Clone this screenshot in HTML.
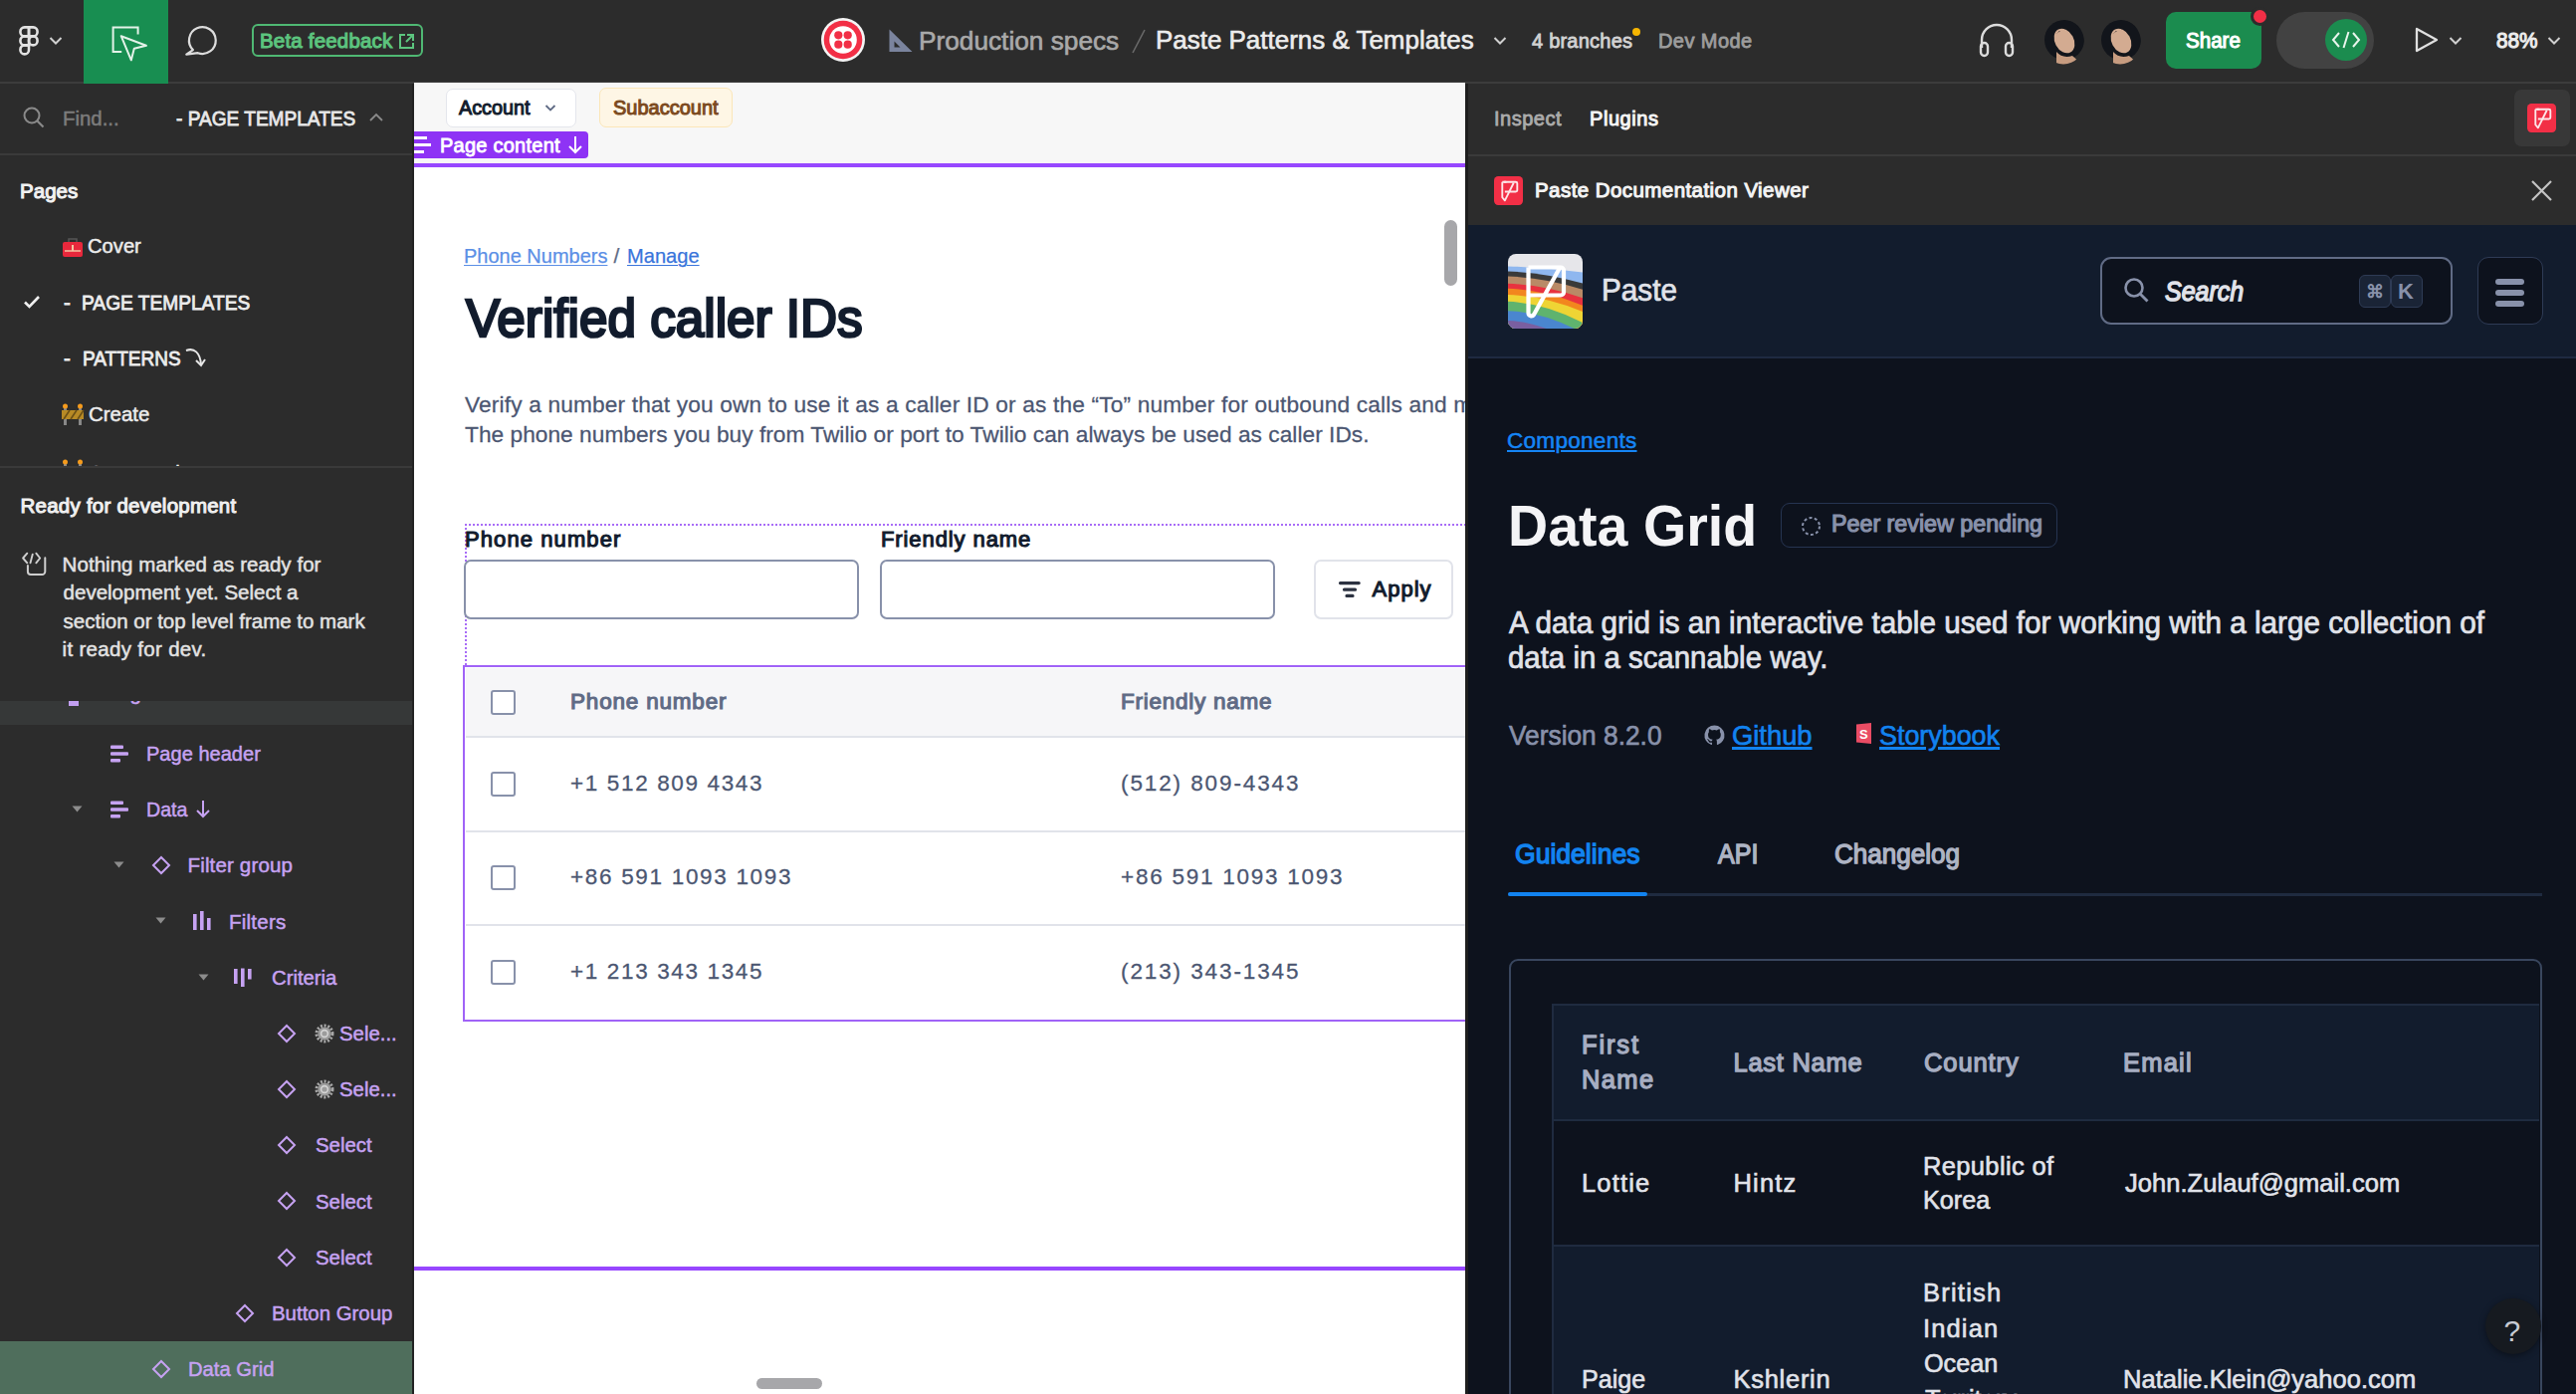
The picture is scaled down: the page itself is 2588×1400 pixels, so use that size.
<!DOCTYPE html><html><head><meta charset="utf-8"><title>Figma Dev Mode</title><style>
*{margin:0;padding:0;box-sizing:border-box}
html,body{width:2588px;height:1400px;overflow:hidden;background:#2c2c2c;font-family:"Liberation Sans",sans-serif}
.t{position:absolute;white-space:nowrap}
svg{overflow:visible}
</style></head><body><div style="position:absolute;left:0px;top:0px;width:2588px;height:83px;background:#2c2c2c"></div>
<div style="position:absolute;left:0px;top:82px;width:2588px;height:2px;background:#3c3c3c"></div>
<div style="position:absolute;left:84px;top:0px;width:85px;height:84px;background:#188e51"></div>
<svg style="position:absolute;left:18.5px;top:25.7px;" width="20" height="30" viewBox="0 0 20 30"><g fill="none" stroke="#e2e2e2" stroke-width="2.6">
<path d="M10 1.4H5.7a4.3 4.5 0 0 0 0 9H10z"/><path d="M10 1.4h4.3a4.3 4.5 0 0 1 0 9H10z"/>
<path d="M10 10.4H5.7a4.3 4.5 0 0 0 0 9H10z"/><ellipse cx="14.3" cy="14.9" rx="4.3" ry="4.5"/>
<path d="M10 19.4H5.7a4.3 4.5 0 1 0 4.3 4.5z"/></g></svg>
<svg style="position:absolute;left:49px;top:36px;" width="14" height="10" viewBox="0 0 14 10"><path d="M1.5 2l5.5 5.5L12.5 2" fill="none" stroke="#d0d0d0" stroke-width="2"/></svg>
<svg style="position:absolute;left:110px;top:24px;" width="40" height="40" viewBox="0 0 40 40"><path d="M12.2 28.1H3.6V3.6H28.6V10.6" fill="none" stroke="#e3f2e8" stroke-width="2"/>
<path d="M11.7 12.2L36.9 21.8L24.8 24.8L21.8 36.4z" fill="none" stroke="#e3f2e8" stroke-width="2" stroke-linejoin="round"/></svg>
<svg style="position:absolute;left:184px;top:22px;" width="38" height="38" viewBox="0 0 38 38"><path d="M9.9 28.1A13.4 13.4 0 1 1 14.8 31.2L3.3 32.6z" fill="none" stroke="#dcdcdc" stroke-width="2.2" stroke-linejoin="round"/></svg>
<div style="position:absolute;left:253px;top:24px;width:172px;height:33px;border:2px solid #4fb873;border-radius:6px"></div>
<div class="t" style="left:261.00px;top:30.65px;font-size:20.5px;line-height:20.5px;color:#5cc47e;font-weight:400;-webkit-text-stroke:1.03px #5cc47e;letter-spacing:0.182px;">Beta feedback</div>
<svg style="position:absolute;left:400px;top:33px;" width="17" height="17" viewBox="0 0 17 17"><path d="M7 2H2v13h13v-5" fill="none" stroke="#5cc47e" stroke-width="2"/><path d="M9 2h6v6M15 2L8 9" fill="none" stroke="#5cc47e" stroke-width="2"/></svg>
<svg style="position:absolute;left:825px;top:18px;" width="44" height="44" viewBox="0 0 44 44"><circle cx="22" cy="22" r="22" fill="#f4f4f4"/><circle cx="22" cy="22" r="19.3" fill="#f22f46"/>
<circle cx="22" cy="22" r="13.8" fill="#fff"/><circle cx="17.3" cy="17.3" r="4.1" fill="#f22f46"/><circle cx="26.7" cy="17.3" r="4.1" fill="#f22f46"/>
<circle cx="17.3" cy="26.7" r="4.1" fill="#f22f46"/><circle cx="26.7" cy="26.7" r="4.1" fill="#f22f46"/></svg>
<svg style="position:absolute;left:892px;top:28px;" width="26" height="25" viewBox="0 0 26 25"><path d="M1.5 1.5v22.5h23z M6.5 13.5v6h6z" fill="#7b849e" fill-rule="evenodd"/></svg>
<div class="t" style="left:923.02px;top:27.57px;font-size:26.5px;line-height:26.5px;color:#a9a9a9;font-weight:400;-webkit-text-stroke:0.64px #a9a9a9;transform:scaleX(0.9899);transform-origin:0 0;">Production specs</div>
<svg style="position:absolute;left:1136px;top:29px;" width="16" height="25" viewBox="0 0 16 25"><path d="M14 1L2 24" stroke="#6a6a6a" stroke-width="1.6"/></svg>
<div class="t" style="left:1161.04px;top:26.57px;font-size:26.5px;line-height:26.5px;color:#ececec;font-weight:400;-webkit-text-stroke:0.64px #ececec;transform:scaleX(0.9792);transform-origin:0 0;">Paste Patterns &amp; Templates</div>
<svg style="position:absolute;left:1500px;top:36px;" width="14" height="10" viewBox="0 0 14 10"><path d="M1.5 2l5.5 5.5L12.5 2" fill="none" stroke="#cfcfcf" stroke-width="2"/></svg>
<div class="t" style="left:1539.00px;top:31.07px;font-size:20px;line-height:20px;color:#d2d2d2;font-weight:400;-webkit-text-stroke:0.80px #d2d2d2;letter-spacing:0.227px;">4 branches</div>
<div style="position:absolute;left:1640px;top:28px;width:8px;height:8px;background:#f7b500;border-radius:50%"></div>
<div class="t" style="left:1666.00px;top:31.07px;font-size:20px;line-height:20px;color:#9d9d9d;font-weight:400;-webkit-text-stroke:0.80px #9d9d9d;letter-spacing:0.424px;">Dev Mode</div>
<svg style="position:absolute;left:1987px;top:22px;" width="38" height="36" viewBox="0 0 38 36"><path d="M4 26V18a15 15 0 0 1 30 0v8" fill="none" stroke="#dcdcdc" stroke-width="2.4"/>
<rect x="3" y="21" width="7" height="13" rx="3.5" fill="none" stroke="#dcdcdc" stroke-width="2.4"/><rect x="28" y="21" width="7" height="13" rx="3.5" fill="none" stroke="#dcdcdc" stroke-width="2.4"/></svg>
<svg style="position:absolute;left:2052px;top:19px;" width="42" height="46" viewBox="0 0 42 46"><defs><clipPath id="ac2073"><ellipse cx="21" cy="23" rx="21" ry="22.5"/></clipPath></defs><g clip-path="url(#ac2073)">
<ellipse cx="22" cy="21" rx="20" ry="20" fill="#12151b"/>
<path d="M14 33 Q20 40 30 37 L38 44 Q30 48 14 47z" fill="#c79c80"/>
<ellipse cx="22" cy="22" rx="9.5" ry="13" transform="rotate(-28 22 22)" fill="#d3ab91"/>
<path d="M13 16 Q20 8 30 12 Q25 9 17 12z" fill="#12151b"/></g></svg>
<svg style="position:absolute;left:2109px;top:19px;" width="42" height="46" viewBox="0 0 42 46"><defs><clipPath id="ac2130"><ellipse cx="21" cy="23" rx="21" ry="22.5"/></clipPath></defs><g clip-path="url(#ac2130)">
<ellipse cx="22" cy="21" rx="20" ry="20" fill="#12151b"/>
<path d="M14 33 Q20 40 30 37 L38 44 Q30 48 14 47z" fill="#c79c80"/>
<ellipse cx="22" cy="22" rx="9.5" ry="13" transform="rotate(-28 22 22)" fill="#d3ab91"/>
<path d="M13 16 Q20 8 30 12 Q25 9 17 12z" fill="#12151b"/></g></svg>
<div style="position:absolute;left:2176px;top:12px;width:96px;height:57px;background:#1b8c4f;border-radius:10px"></div>
<div class="t" style="left:2196.00px;top:30.80px;font-size:21.5px;line-height:21.5px;color:#ffffff;font-weight:400;-webkit-text-stroke:1.07px #ffffff;transform:scaleX(0.9572);transform-origin:0 0;">Share</div>
<div style="position:absolute;left:2261px;top:7px;width:19px;height:19px;background:#f22f46;border-radius:50%;border:3px solid #2c2c2c"></div>
<div style="position:absolute;left:2287px;top:12px;width:98px;height:57px;background:#424242;border-radius:29px"></div>
<div style="position:absolute;left:2336px;top:19px;width:42px;height:42px;background:#1b8c4f;border-radius:50%"></div>
<svg style="position:absolute;left:2342px;top:30px;" width="30" height="20" viewBox="0 0 30 20"><path d="M8 3L2 10l6 7M22 3l6 7-6 7M17.5 2l-5 16" fill="none" stroke="#e8f5ec" stroke-width="2"/></svg>
<svg style="position:absolute;left:2425px;top:26px;" width="26" height="28" viewBox="0 0 26 28"><path d="M3 3l20 11L3 25z" fill="none" stroke="#e0e0e0" stroke-width="2.3" stroke-linejoin="round"/></svg>
<svg style="position:absolute;left:2460px;top:36px;" width="14" height="10" viewBox="0 0 14 10"><path d="M1.5 2l5.5 5.5L12.5 2" fill="none" stroke="#cfcfcf" stroke-width="2"/></svg>
<div class="t" style="left:2508.00px;top:30.38px;font-size:22px;line-height:22px;color:#ececec;font-weight:400;-webkit-text-stroke:1.10px #ececec;transform:scaleX(0.9432);transform-origin:0 0;">88%</div>
<svg style="position:absolute;left:2559px;top:36px;" width="14" height="10" viewBox="0 0 14 10"><path d="M1.5 2l5.5 5.5L12.5 2" fill="none" stroke="#cfcfcf" stroke-width="2"/></svg>
<div style="position:absolute;left:0px;top:84px;width:415px;height:1316px;background:#2c2c2c"></div>
<div style="position:absolute;left:414px;top:84px;width:2px;height:1316px;background:#232323"></div>
<svg style="position:absolute;left:22px;top:106px;" width="26" height="26" viewBox="0 0 26 26"><circle cx="10" cy="10" r="7.5" fill="none" stroke="#8a8a8a" stroke-width="2"/><path d="M15.5 15.5l6 6" stroke="#8a8a8a" stroke-width="2.2"/></svg>
<div class="t" style="left:63.00px;top:108.65px;font-size:20.5px;line-height:20.5px;color:#7c7c7c;font-weight:400;-webkit-text-stroke:0.49px #7c7c7c;transform:scaleX(0.9950);transform-origin:0 0;">Find...</div>
<div class="t" style="left:177.00px;top:108.65px;font-size:20.5px;line-height:20.5px;color:#e8e8e8;font-weight:400;-webkit-text-stroke:0.82px #e8e8e8;transform:scaleX(0.9309);transform-origin:0 0;">- PAGE TEMPLATES</div>
<svg style="position:absolute;left:370px;top:112px;" width="16" height="12" viewBox="0 0 16 12"><path d="M2 9l6-6 6 6" fill="none" stroke="#8a8a8a" stroke-width="1.8"/></svg>
<div style="position:absolute;left:0px;top:154px;width:414px;height:2px;background:#3a3a3a"></div>
<div class="t" style="left:20.00px;top:181.65px;font-size:20.5px;line-height:20.5px;color:#f2f2f2;font-weight:400;-webkit-text-stroke:1.03px #f2f2f2;letter-spacing:0.031px;">Pages</div>
<svg style="position:absolute;left:62px;top:237px;" width="22" height="22" viewBox="0 0 22 22"><rect x="1" y="6" width="20" height="15" rx="2" fill="#e8283c"/><path d="M7 6V3h8v3" fill="none" stroke="#555" stroke-width="1.5"/><path d="M3 15h16" stroke="#f5c4a0" stroke-width="1.5"/><rect x="10" y="9" width="2" height="6" fill="#f5c4a0"/></svg>
<div class="t" style="left:88.02px;top:236.65px;font-size:20.5px;line-height:20.5px;color:#ececec;font-weight:400;-webkit-text-stroke:0.49px #ececec;transform:scaleX(0.9841);transform-origin:0 0;">Cover</div>
<svg style="position:absolute;left:22px;top:295px;" width="20" height="16" viewBox="0 0 20 16"><path d="M3 8.5l4.5 4.5L17 3" fill="none" stroke="#f0f0f0" stroke-width="2.6"/></svg>
<div class="t" style="left:64.00px;top:293.65px;font-size:20.5px;line-height:20.5px;color:#ececec;font-weight:400;-webkit-text-stroke:0.82px #ececec;">-</div>
<div class="t" style="left:81.67px;top:293.65px;font-size:20.5px;line-height:20.5px;color:#ececec;font-weight:400;-webkit-text-stroke:0.82px #ececec;transform:scaleX(0.9342);transform-origin:0 0;">PAGE TEMPLATES</div>
<div class="t" style="left:64.00px;top:349.65px;font-size:20.5px;line-height:20.5px;color:#ececec;font-weight:400;-webkit-text-stroke:0.82px #ececec;">-</div>
<div class="t" style="left:82.57px;top:349.65px;font-size:20.5px;line-height:20.5px;color:#ececec;font-weight:400;-webkit-text-stroke:0.82px #ececec;transform:scaleX(0.9271);transform-origin:0 0;">PATTERNS</div>
<svg style="position:absolute;left:185px;top:348px;" width="24" height="24" viewBox="0 0 24 24"><path d="M2 4c8-3 14 2 15 14" fill="none" stroke="#e6e6e6" stroke-width="2"/><path d="M12 14l5 5 4-6" fill="none" stroke="#e6e6e6" stroke-width="2"/></svg>
<svg style="position:absolute;left:62px;top:405px;" width="22" height="22" viewBox="0 0 22 22"><rect x="2" y="1" width="3" height="21" fill="#888"/><rect x="17" y="1" width="3" height="21" fill="#888"/><circle cx="3.5" cy="3" r="2.5" fill="#f59b1c"/><circle cx="18.5" cy="3" r="2.5" fill="#f59b1c"/><rect x="0" y="7" width="22" height="9" fill="#b78a25"/><path d="M2 16l6-9M9 16l6-9M16 16l6-9" stroke="#6b5016" stroke-width="1.6"/></svg>
<div class="t" style="left:88.50px;top:405.65px;font-size:20.5px;line-height:20.5px;color:#ececec;font-weight:400;-webkit-text-stroke:0.49px #ececec;transform:scaleX(0.9979);transform-origin:0 0;">Create</div>
<div style="position:absolute;left:0;top:440px;width:414px;height:28px;overflow:hidden">
<svg style="position:absolute;left:62px;top:21px;" width="22" height="22" viewBox="0 0 22 22"><rect x="2" y="1" width="3" height="21" fill="#888"/><rect x="17" y="1" width="3" height="21" fill="#888"/><circle cx="3.5" cy="3" r="2.5" fill="#f59b1c"/><circle cx="18.5" cy="3" r="2.5" fill="#f59b1c"/></svg>
<div class="t" style="left:88.50px;top:24.85px;font-size:20.5px;line-height:20.5px;color:#ececec;font-weight:400;-webkit-text-stroke:0.49px #ececec;">Construction</div>
</div>
<div style="position:absolute;left:0px;top:468px;width:414px;height:2px;background:#3a3a3a"></div>
<div class="t" style="left:20.50px;top:498.05px;font-size:20.5px;line-height:20.5px;color:#f0f0f0;font-weight:400;-webkit-text-stroke:1.03px #f0f0f0;letter-spacing:0.237px;">Ready for development</div>
<svg style="position:absolute;left:21px;top:553px;" width="28" height="27" viewBox="0 0 28 27"><path d="M6.3 2.7L2.1 7.5L6.3 12.3M11.8 3.6L9.5 12.3M15.3 2.7L19.2 7.5L15.3 12.3" fill="none" stroke="#cfcfcf" stroke-width="1.9" stroke-linecap="round" stroke-linejoin="round"/><path d="M6.9 14.9V21a3 3 0 0 0 3 3H21.3a3 3 0 0 0 3-3V7.2" fill="none" stroke="#cfcfcf" stroke-width="2" stroke-linecap="round"/></svg>
<div class="t" style="left:62.60px;top:557.15px;font-size:20.5px;line-height:20.5px;color:#e3e3e3;font-weight:400;-webkit-text-stroke:0.49px #e3e3e3;letter-spacing:0.045px;">Nothing marked as ready for</div>
<div class="t" style="left:63.60px;top:585.45px;font-size:20.5px;line-height:20.5px;color:#e3e3e3;font-weight:400;-webkit-text-stroke:0.49px #e3e3e3;">development yet. Select a</div>
<div class="t" style="left:63.60px;top:613.75px;font-size:20.5px;line-height:20.5px;color:#e3e3e3;font-weight:400;-webkit-text-stroke:0.49px #e3e3e3;">section or top level frame to mark</div>
<div class="t" style="left:62.60px;top:642.05px;font-size:20.5px;line-height:20.5px;color:#e3e3e3;font-weight:400;-webkit-text-stroke:0.49px #e3e3e3;letter-spacing:0.308px;">it ready for dev.</div>
<div style="position:absolute;left:0px;top:704px;width:414px;height:24px;background:#363838"></div>
<div style="position:absolute;left:0;top:704px;width:414px;height:24px;overflow:hidden">
<div style="position:absolute;left:69px;top:0px;width:10px;height:4.5px;background:#c29ff0"></div>
<div class="t" style="left:105.40px;top:-17.55px;font-size:20.5px;line-height:20.5px;color:#c6a2f2;font-weight:400;-webkit-text-stroke:0.49px #c6a2f2;">Page content</div>
</div>
<svg style="position:absolute;left:110px;top:746.8px;" width="20" height="20" viewBox="0 0 20 20"><rect x="1" y="1.5" width="13" height="3.6" rx="1" fill="#c6a2f2"/><rect x="1" y="8.2" width="18" height="3.6" rx="1" fill="#c6a2f2"/><rect x="1" y="15" width="10" height="3.6" rx="1" fill="#c6a2f2"/></svg>
<div class="t" style="left:147.42px;top:746.95px;font-size:20.5px;line-height:20.5px;color:#c6a2f2;font-weight:400;-webkit-text-stroke:0.49px #c6a2f2;transform:scaleX(0.9779);transform-origin:0 0;">Page header</div>
<svg style="position:absolute;left:72px;top:809.0px;" width="11" height="8" viewBox="0 0 11 8"><path d="M0.5 0.5h10L5.5 6.5z" fill="#8c8c8c"/></svg>
<svg style="position:absolute;left:110px;top:803.0px;" width="20" height="20" viewBox="0 0 20 20"><rect x="1" y="1.5" width="13" height="3.6" rx="1" fill="#c6a2f2"/><rect x="1" y="8.2" width="18" height="3.6" rx="1" fill="#c6a2f2"/><rect x="1" y="15" width="10" height="3.6" rx="1" fill="#c6a2f2"/></svg>
<div class="t" style="left:147.44px;top:803.15px;font-size:20.5px;line-height:20.5px;color:#c6a2f2;font-weight:400;-webkit-text-stroke:0.49px #c6a2f2;transform:scaleX(0.9557);transform-origin:0 0;">Data</div>
<svg style="position:absolute;left:196px;top:803.0px;" width="16" height="20" viewBox="0 0 16 20"><path d="M8 1v16M2 11l6 6 6-6" fill="none" stroke="#c6a2f2" stroke-width="2"/></svg>
<svg style="position:absolute;left:114px;top:865.1999999999999px;" width="11" height="8" viewBox="0 0 11 8"><path d="M0.5 0.5h10L5.5 6.5z" fill="#8c8c8c"/></svg>
<svg style="position:absolute;left:152px;top:859.1999999999999px;" width="20" height="20" viewBox="0 0 20 20"><path d="M10 2l8 8-8 8-8-8z" fill="none" stroke="#c6a2f2" stroke-width="2"/></svg>
<div class="t" style="left:188.50px;top:859.35px;font-size:20.5px;line-height:20.5px;color:#c6a2f2;font-weight:400;-webkit-text-stroke:0.49px #c6a2f2;letter-spacing:0.156px;">Filter group</div>
<svg style="position:absolute;left:156px;top:921.4px;" width="11" height="8" viewBox="0 0 11 8"><path d="M0.5 0.5h10L5.5 6.5z" fill="#8c8c8c"/></svg>
<svg style="position:absolute;left:193px;top:915.4px;" width="22" height="20" viewBox="0 0 22 20"><rect x="1" y="3" width="3.6" height="16" fill="#c6a2f2"/><rect x="8" y="0" width="3.6" height="19" fill="#c6a2f2"/><rect x="15" y="7" width="3.6" height="12" fill="#c6a2f2"/></svg>
<div class="t" style="left:230.00px;top:915.55px;font-size:20.5px;line-height:20.5px;color:#c6a2f2;font-weight:400;-webkit-text-stroke:0.49px #c6a2f2;letter-spacing:0.241px;">Filters</div>
<svg style="position:absolute;left:199px;top:977.5999999999999px;" width="11" height="8" viewBox="0 0 11 8"><path d="M0.5 0.5h10L5.5 6.5z" fill="#8c8c8c"/></svg>
<svg style="position:absolute;left:234px;top:971.5999999999999px;" width="22" height="20" viewBox="0 0 22 20"><rect x="1" y="1" width="3.6" height="15" fill="#c6a2f2"/><rect x="8" y="0.5" width="3.6" height="18.5" fill="#c6a2f2"/><rect x="15" y="1" width="3.6" height="10.5" fill="#c6a2f2"/></svg>
<div class="t" style="left:273.01px;top:971.75px;font-size:20.5px;line-height:20.5px;color:#c6a2f2;font-weight:400;-webkit-text-stroke:0.49px #c6a2f2;transform:scaleX(0.9899);transform-origin:0 0;">Criteria</div>
<svg style="position:absolute;left:278px;top:1027.8px;" width="20" height="20" viewBox="0 0 20 20"><path d="M10 2l8 8-8 8-8-8z" fill="none" stroke="#c6a2f2" stroke-width="2"/></svg>
<svg style="position:absolute;left:316px;top:1027.8px;" width="20" height="20" viewBox="0 0 20 20"><circle cx="10" cy="10" r="8" fill="none" stroke="#a8a8a8" stroke-width="3" stroke-dasharray="2.1 1.6"/><circle cx="10" cy="10" r="6.6" fill="#9c9c9c"/><circle cx="10" cy="10" r="3.4" fill="none" stroke="#d4d4d4" stroke-width="1.6"/></svg>
<div class="t" style="left:341.00px;top:1027.95px;font-size:20.5px;line-height:20.5px;color:#c6a2f2;font-weight:400;-webkit-text-stroke:0.49px #c6a2f2;transform:scaleX(0.9925);transform-origin:0 0;">Sele...</div>
<svg style="position:absolute;left:278px;top:1084.0px;" width="20" height="20" viewBox="0 0 20 20"><path d="M10 2l8 8-8 8-8-8z" fill="none" stroke="#c6a2f2" stroke-width="2"/></svg>
<svg style="position:absolute;left:316px;top:1084.0px;" width="20" height="20" viewBox="0 0 20 20"><circle cx="10" cy="10" r="8" fill="none" stroke="#a8a8a8" stroke-width="3" stroke-dasharray="2.1 1.6"/><circle cx="10" cy="10" r="6.6" fill="#9c9c9c"/><circle cx="10" cy="10" r="3.4" fill="none" stroke="#d4d4d4" stroke-width="1.6"/></svg>
<div class="t" style="left:341.00px;top:1084.15px;font-size:20.5px;line-height:20.5px;color:#c6a2f2;font-weight:400;-webkit-text-stroke:0.49px #c6a2f2;transform:scaleX(0.9925);transform-origin:0 0;">Sele...</div>
<svg style="position:absolute;left:278px;top:1140.2px;" width="20" height="20" viewBox="0 0 20 20"><path d="M10 2l8 8-8 8-8-8z" fill="none" stroke="#c6a2f2" stroke-width="2"/></svg>
<div class="t" style="left:316.50px;top:1140.35px;font-size:20.5px;line-height:20.5px;color:#c6a2f2;font-weight:400;-webkit-text-stroke:0.49px #c6a2f2;transform:scaleX(0.9951);transform-origin:0 0;">Select</div>
<svg style="position:absolute;left:278px;top:1196.4px;" width="20" height="20" viewBox="0 0 20 20"><path d="M10 2l8 8-8 8-8-8z" fill="none" stroke="#c6a2f2" stroke-width="2"/></svg>
<div class="t" style="left:316.50px;top:1196.55px;font-size:20.5px;line-height:20.5px;color:#c6a2f2;font-weight:400;-webkit-text-stroke:0.49px #c6a2f2;transform:scaleX(0.9951);transform-origin:0 0;">Select</div>
<svg style="position:absolute;left:278px;top:1252.6px;" width="20" height="20" viewBox="0 0 20 20"><path d="M10 2l8 8-8 8-8-8z" fill="none" stroke="#c6a2f2" stroke-width="2"/></svg>
<div class="t" style="left:316.50px;top:1252.75px;font-size:20.5px;line-height:20.5px;color:#c6a2f2;font-weight:400;-webkit-text-stroke:0.49px #c6a2f2;transform:scaleX(0.9951);transform-origin:0 0;">Select</div>
<svg style="position:absolute;left:236px;top:1308.8px;" width="20" height="20" viewBox="0 0 20 20"><path d="M10 2l8 8-8 8-8-8z" fill="none" stroke="#c6a2f2" stroke-width="2"/></svg>
<div class="t" style="left:273.00px;top:1308.95px;font-size:20.5px;line-height:20.5px;color:#c6a2f2;font-weight:400;-webkit-text-stroke:0.49px #c6a2f2;transform:scaleX(0.9955);transform-origin:0 0;">Button Group</div>
<div style="position:absolute;left:0px;top:1347px;width:414px;height:53px;background:#4f6e5c"></div>
<svg style="position:absolute;left:152px;top:1365.0px;" width="20" height="20" viewBox="0 0 20 20"><path d="M10 2l8 8-8 8-8-8z" fill="none" stroke="#c6a2f2" stroke-width="2"/></svg>
<div class="t" style="left:188.52px;top:1365.15px;font-size:20.5px;line-height:20.5px;color:#c6a2f2;font-weight:400;-webkit-text-stroke:0.49px #c6a2f2;transform:scaleX(0.9847);transform-origin:0 0;">Data Grid</div>
<div style="position:absolute;left:416px;top:83px;width:1056px;height:1317px;overflow:hidden;background:#f7f7f7">
<div style="position:absolute;left:0px;top:83px;width:1056px;height:1108px;background:#ffffff"></div>
<div style="position:absolute;left:0px;top:1191px;width:1056px;height:126px;background:#ffffff"></div>
<div style="position:absolute;left:32px;top:6px;width:131px;height:39px;background:#fff;border:1px solid #e4e6ec;border-radius:7px"></div>
<div class="t" style="left:45.00px;top:14.57px;font-size:20px;line-height:20px;color:#121c2d;font-weight:400;-webkit-text-stroke:1.00px #121c2d;transform:scaleX(0.9902);transform-origin:0 0;">Account</div>
<svg style="position:absolute;left:131px;top:21px;" width="12" height="9" viewBox="0 0 12 9"><path d="M1.5 2l4.5 4.5L10.5 2" fill="none" stroke="#606b85" stroke-width="1.8"/></svg>
<div style="position:absolute;left:186px;top:5px;width:134px;height:40px;background:#fef6e5;border:1px solid #fbe6b8;border-radius:7px"></div>
<div class="t" style="left:200.00px;top:14.57px;font-size:20px;line-height:20px;color:#7c4a1e;font-weight:400;-webkit-text-stroke:1.00px #7c4a1e;transform:scaleX(0.9993);transform-origin:0 0;">Subaccount</div>
<div style="position:absolute;left:0px;top:49px;width:175px;height:27px;background:#8e33f5;border-radius:0 4px 4px 0"></div>
<svg style="position:absolute;left:0px;top:53px;" width="20" height="19" viewBox="0 0 20 19"><rect x="0" y="1" width="13" height="3" fill="#fff"/><rect x="0" y="8" width="17" height="3" fill="#fff"/><rect x="0" y="15" width="10" height="3" fill="#fff"/></svg>
<div class="t" style="left:26.00px;top:52.67px;font-size:20px;line-height:20px;color:#ffffff;font-weight:400;-webkit-text-stroke:0.80px #ffffff;letter-spacing:0.244px;">Page content</div>
<svg style="position:absolute;left:153px;top:53px;" width="18" height="19" viewBox="0 0 18 19"><path d="M9 1v16M3 11l6 6 6-6" fill="none" stroke="#fff" stroke-width="2"/></svg>
<div style="position:absolute;left:0px;top:81px;width:1056px;height:4px;background:#9747ff"></div>
<div style="position:absolute;left:1035px;top:138px;width:13px;height:66px;background:#a7a7aa;border-radius:7px"></div>
<div class="t" style="left:50.45px;top:162.92px;font-size:21px;line-height:21px;color:#5b8fe6;font-weight:400;-webkit-text-stroke:0.25px #5b8fe6;transform:scaleX(0.9518);transform-origin:0 0;text-decoration:underline;text-decoration-thickness:1px;text-underline-offset:2px;">Phone Numbers</div>
<div class="t" style="left:200.50px;top:163.22px;font-size:21px;line-height:21px;color:#606b85;font-weight:400;-webkit-text-stroke:0.25px #606b85;">/</div>
<div class="t" style="left:214.04px;top:162.92px;font-size:21px;line-height:21px;color:#3a75db;font-weight:400;-webkit-text-stroke:0.25px #3a75db;transform:scaleX(0.9567);transform-origin:0 0;text-decoration:underline;text-decoration-thickness:1px;text-underline-offset:2px;">Manage</div>
<div class="t" style="left:52.00px;top:209.71px;font-size:53.5px;line-height:53.5px;color:#121c2d;font-weight:400;-webkit-text-stroke:2.68px #121c2d;transform:scaleX(0.9577);transform-origin:0 0;">Verified caller IDs</div>
<div class="t" style="left:51.00px;top:311.78px;font-size:22.7px;line-height:22.7px;color:#4b5671;font-weight:400;-webkit-text-stroke:0.27px #4b5671;letter-spacing:0.161px;">Verify a number that you own to use it as a caller ID or as the “To” number for outbound calls and messages.</div>
<div class="t" style="left:51.00px;top:341.98px;font-size:22.7px;line-height:22.7px;color:#4b5671;font-weight:400;-webkit-text-stroke:0.27px #4b5671;letter-spacing:0.030px;">The phone numbers you buy from Twilio or port to Twilio can always be used as caller IDs.</div>
<div style="position:absolute;left:51px;top:443px;width:1010px;height:142px;border-top:2px dotted #a86cf7;border-left:2px dotted #a86cf7"></div>
<div class="t" style="left:51.00px;top:448.38px;font-size:22px;line-height:22px;color:#121c2d;font-weight:400;-webkit-text-stroke:1.10px #121c2d;letter-spacing:1.091px;">Phone number</div>
<div class="t" style="left:469.00px;top:448.38px;font-size:22px;line-height:22px;color:#121c2d;font-weight:400;-webkit-text-stroke:1.10px #121c2d;letter-spacing:0.904px;">Friendly name</div>
<div style="position:absolute;left:50px;top:479px;width:397px;height:60px;border:2px solid #8891aa;border-radius:7px;background:#fff"></div>
<div style="position:absolute;left:468px;top:479px;width:397px;height:60px;border:2px solid #8891aa;border-radius:7px;background:#fff"></div>
<div style="position:absolute;left:904px;top:479px;width:140px;height:60px;border:2px solid #e1e3ea;border-radius:7px;background:#fff"></div>
<svg style="position:absolute;left:924px;top:497px;" width="30" height="22" viewBox="0 0 30 22"><path d="M6.5 5.6h18.7M10.5 12.2h11M13 18.4h6" stroke="#2b3140" stroke-width="3.2" stroke-linecap="round"/></svg>
<div class="t" style="left:962.60px;top:498.08px;font-size:22px;line-height:22px;color:#121c2d;font-weight:400;-webkit-text-stroke:1.10px #121c2d;letter-spacing:0.992px;">Apply</div>
<div style="position:absolute;left:49px;top:585px;width:1010px;height:358px;border:2px solid #a063f7;border-right:none"></div>
<div style="position:absolute;left:52px;top:588px;width:1004px;height:68px;background:#f6f6f8"></div>
<div style="position:absolute;left:52px;top:656px;width:1004px;height:2px;background:#e1e3ea"></div>
<div style="position:absolute;left:52px;top:751px;width:1004px;height:1.5px;background:#e1e3ea"></div>
<div style="position:absolute;left:52px;top:845px;width:1004px;height:1.5px;background:#e1e3ea"></div>
<div style="position:absolute;left:77px;top:610px;width:25px;height:25px;border:2px solid #8891aa;border-radius:3px;background:#fff"></div>
<div style="position:absolute;left:77px;top:692px;width:25px;height:25px;border:2px solid #8891aa;border-radius:3px;background:#fff"></div>
<div style="position:absolute;left:77px;top:786px;width:25px;height:25px;border:2px solid #8891aa;border-radius:3px;background:#fff"></div>
<div style="position:absolute;left:77px;top:881px;width:25px;height:25px;border:2px solid #8891aa;border-radius:3px;background:#fff"></div>
<div class="t" style="left:157.00px;top:611.45px;font-size:22.5px;line-height:22.5px;color:#606b85;font-weight:400;-webkit-text-stroke:1.12px #606b85;letter-spacing:0.808px;">Phone number</div>
<div class="t" style="left:710.00px;top:611.45px;font-size:22.5px;line-height:22.5px;color:#606b85;font-weight:400;-webkit-text-stroke:1.12px #606b85;letter-spacing:0.746px;">Friendly name</div>
<div class="t" style="left:157.00px;top:692.95px;font-size:22.5px;line-height:22.5px;color:#4b5671;font-weight:400;-webkit-text-stroke:0.27px #4b5671;letter-spacing:1.641px;">+1 512 809 4343</div>
<div class="t" style="left:710.00px;top:692.95px;font-size:22.5px;line-height:22.5px;color:#4b5671;font-weight:400;-webkit-text-stroke:0.27px #4b5671;letter-spacing:1.896px;">(512) 809-4343</div>
<div class="t" style="left:157.00px;top:786.95px;font-size:22.5px;line-height:22.5px;color:#4b5671;font-weight:400;-webkit-text-stroke:0.27px #4b5671;letter-spacing:1.684px;">+86 591 1093 1093</div>
<div class="t" style="left:710.00px;top:786.95px;font-size:22.5px;line-height:22.5px;color:#4b5671;font-weight:400;-webkit-text-stroke:0.27px #4b5671;letter-spacing:1.747px;">+86 591 1093 1093</div>
<div class="t" style="left:157.00px;top:881.95px;font-size:22.5px;line-height:22.5px;color:#4b5671;font-weight:400;-webkit-text-stroke:0.27px #4b5671;letter-spacing:1.641px;">+1 213 343 1345</div>
<div class="t" style="left:710.00px;top:881.95px;font-size:22.5px;line-height:22.5px;color:#4b5671;font-weight:400;-webkit-text-stroke:0.27px #4b5671;letter-spacing:1.896px;">(213) 343-1345</div>
<div style="position:absolute;left:0px;top:1189px;width:1056px;height:3.5px;background:#9747ff"></div>
<div style="position:absolute;left:344px;top:1301px;width:66px;height:11px;background:#a7a7aa;border-radius:6px"></div>
</div>
<div style="position:absolute;left:1472px;top:84px;width:3px;height:1316px;background:#1e1e1e"></div>
<div style="position:absolute;left:1475px;top:84px;width:1113px;height:142px;background:#2c2c2c"></div>
<div class="t" style="left:1501.00px;top:109.07px;font-size:20px;line-height:20px;color:#ababab;font-weight:400;-webkit-text-stroke:0.80px #ababab;letter-spacing:0.512px;">Inspect</div>
<div class="t" style="left:1597.00px;top:109.07px;font-size:20px;line-height:20px;color:#f4f4f4;font-weight:400;-webkit-text-stroke:1.00px #f4f4f4;letter-spacing:0.567px;">Plugins</div>
<div style="position:absolute;left:2526px;top:90px;width:56px;height:57px;background:#383838;border-radius:7px"></div>
<svg style="position:absolute;left:2539px;top:104px;" width="29" height="29" viewBox="0 0 28 28"><rect x="0" y="0" width="28" height="28" rx="4" fill="#f22f46"/>
<path d="M9.5 5.5h11.5a1.5 1.5 0 0 1 1.5 1.5v6.5a1.5 1.5 0 0 1-1.5 1.5H10.5" fill="none" stroke="#fde6e9" stroke-width="1.8"/>
<path d="M8 5.5h3.5l-0.5 0M8 5.5v15l2.5 3 8.5-17" fill="none" stroke="#fde6e9" stroke-width="1.8" stroke-linejoin="round"/></svg>
<div style="position:absolute;left:1475px;top:155px;width:1113px;height:2px;background:#3a3a3a"></div>
<svg style="position:absolute;left:1501px;top:177px;" width="29" height="29" viewBox="0 0 28 28"><rect x="0" y="0" width="28" height="28" rx="4" fill="#f22f46"/>
<path d="M9.5 5.5h11.5a1.5 1.5 0 0 1 1.5 1.5v6.5a1.5 1.5 0 0 1-1.5 1.5H10.5" fill="none" stroke="#fde6e9" stroke-width="1.8"/>
<path d="M8 5.5h3.5l-0.5 0M8 5.5v15l2.5 3 8.5-17" fill="none" stroke="#fde6e9" stroke-width="1.8" stroke-linejoin="round"/></svg>
<div class="t" style="left:1542.00px;top:181.05px;font-size:20.5px;line-height:20.5px;color:#f4f4f4;font-weight:400;-webkit-text-stroke:1.03px #f4f4f4;letter-spacing:0.434px;">Paste Documentation Viewer</div>
<svg style="position:absolute;left:2541px;top:179px;" width="25" height="25" viewBox="0 0 25 25"><path d="M3 3l19 19M22 3L3 22" stroke="#c4c4c4" stroke-width="2.2"/></svg>
<div style="position:absolute;left:1475px;top:226px;width:1113px;height:1174px;background:#0d121d"></div>
<div style="position:absolute;left:1475px;top:226px;width:1113px;height:132px;background:#121c2d"></div>
<div style="position:absolute;left:1475px;top:357.5px;width:1113px;height:2.5px;background:#1e2a41"></div>
<svg style="position:absolute;left:1515px;top:255px;" width="75" height="75" viewBox="0 0 75 75"><defs><clipPath id="lc"><rect x="0" y="0" width="75" height="75" rx="8"/></clipPath></defs>
<g clip-path="url(#lc)"><rect width="75" height="75" fill="#e6e6ea"/><path d="M-1 12.4 Q37.5 13.6 76 18.6 V100 H-1z" fill="#8fb7ef"/><path d="M-1 17.4 Q37.5 18.599999999999998 76 29.8 V100 H-1z" fill="#3a3a3a"/><path d="M-1 22.4 Q37.5 23.599999999999998 76 36 V100 H-1z" fill="#b98a66"/><path d="M-1 29.8 Q37.5 31.0 76 44.7 V100 H-1z" fill="#e8323f"/><path d="M-1 34.8 Q37.5 36.0 76 52.2 V100 H-1z" fill="#f2861e"/><path d="M-1 41 Q37.5 42.2 76 58.4 V100 H-1z" fill="#efd434"/><path d="M-1 47.8 Q37.5 49.0 76 69.6 V100 H-1z" fill="#5fb36e"/><path d="M-1 57.1 Q37.5 58.300000000000004 76 80 V100 H-1z" fill="#4a86cf"/><path d="M-1 67 Q37.5 68.2 76 95 V100 H-1z" fill="#7a5fa0"/></g>
<path d="M20.5 13.5h32.5a3 3 0 0 1 3 3v22a3 3 0 0 1-3 3H21" fill="none" stroke="#fff" stroke-width="4.2"/>
<path d="M20.5 13.5v46a3 3 0 0 0 5.5 1.5L52 14" fill="none" stroke="#fff" stroke-width="4.2" stroke-linejoin="round"/></svg>
<div class="t" style="left:1609.05px;top:275.98px;font-size:30.5px;line-height:30.5px;color:#e1e3ea;font-weight:400;-webkit-text-stroke:0.73px #e1e3ea;transform:scaleX(0.9729);transform-origin:0 0;">Paste</div>
<div style="position:absolute;left:2110px;top:258px;width:354px;height:68px;background:#0d121d;border:2px solid #606b85;border-radius:11px"></div>
<svg style="position:absolute;left:2132px;top:277px;" width="30" height="30" viewBox="0 0 30 30"><circle cx="12" cy="12" r="8.5" fill="none" stroke="#8891aa" stroke-width="2.6"/><path d="M18.5 18.5l7 7" stroke="#8891aa" stroke-width="2.8"/></svg>
<div class="t" style="left:2175.00px;top:278.72px;font-size:27.5px;line-height:27.5px;color:#e1e3ea;font-weight:400;-webkit-text-stroke:1.38px #e1e3ea;transform:scaleX(0.9097);transform-origin:0 0;font-style:italic;">Search</div>
<div style="position:absolute;left:2370px;top:276px;width:32px;height:33px;background:#1a2436;border:1.5px solid #2e3b55;border-radius:6px"></div>
<div class="t" style="left:2377.00px;top:283.76px;font-size:18px;line-height:18px;color:#8891aa;font-weight:700;">⌘</div>
<div style="position:absolute;left:2402px;top:276px;width:32px;height:33px;background:#1a2436;border:1.5px solid #2e3b55;border-radius:6px"></div>
<div class="t" style="left:2409.00px;top:282.38px;font-size:22px;line-height:22px;color:#8891aa;font-weight:700;">K</div>
<div style="position:absolute;left:2489px;top:258px;width:66px;height:68px;background:#0d121d;border:1.5px solid #2e3b55;border-radius:11px"></div>
<div style="position:absolute;left:2507px;top:280px;width:29px;height:5.5px;background:#8891aa;border-radius:3px"></div>
<div style="position:absolute;left:2507px;top:291px;width:29px;height:5.5px;background:#8891aa;border-radius:3px"></div>
<div style="position:absolute;left:2507px;top:302px;width:29px;height:5.5px;background:#8891aa;border-radius:3px"></div>
<div class="t" style="left:1514.00px;top:431.95px;font-size:22.5px;line-height:22.5px;color:#1585f5;font-weight:400;-webkit-text-stroke:0.54px #1585f5;letter-spacing:0.297px;text-decoration:underline;text-decoration-thickness:1.5px;text-underline-offset:2px;">Components</div>
<div class="t" style="left:1515.13px;top:498.90px;font-size:58px;line-height:58px;color:#f4f4f6;font-weight:700;transform:scaleX(0.9583);transform-origin:0 0;">Data Grid</div>
<div style="position:absolute;left:1789px;top:505px;width:278px;height:45px;border:1.5px solid #263451;border-radius:9px"></div>
<svg style="position:absolute;left:1808px;top:517px;" width="23" height="23" viewBox="0 0 23 23"><circle cx="11.5" cy="11.5" r="8.5" fill="none" stroke="#8891aa" stroke-width="2" stroke-dasharray="3 2.4"/></svg>
<div class="t" style="left:1839.51px;top:515.11px;font-size:23.5px;line-height:23.5px;color:#8891aa;font-weight:400;-webkit-text-stroke:1.18px #8891aa;transform:scaleX(0.9898);transform-origin:0 0;">Peer review pending</div>
<div class="t" style="left:1515.60px;top:609.76px;font-size:31px;line-height:31px;color:#e1e3ea;font-weight:400;-webkit-text-stroke:0.74px #e1e3ea;transform:scaleX(0.9574);transform-origin:0 0;">A data grid is an interactive table used for working with a large collection of</div>
<div class="t" style="left:1514.65px;top:644.76px;font-size:31px;line-height:31px;color:#e1e3ea;font-weight:400;-webkit-text-stroke:0.74px #e1e3ea;transform:scaleX(0.9484);transform-origin:0 0;">data in a scannable way.</div>
<div class="t" style="left:1515.60px;top:724.90px;font-size:28px;line-height:28px;color:#8891aa;font-weight:400;-webkit-text-stroke:0.67px #8891aa;transform:scaleX(0.9394);transform-origin:0 0;">Version 8.2.0</div>
<svg style="position:absolute;left:1711px;top:727px;" width="23" height="23" viewBox="0 0 23 23"><path d="M11.5 1.5a10 10 0 0 0-3.2 19.5c.5.1.7-.2.7-.5v-1.8c-2.8.6-3.4-1.3-3.4-1.3-.5-1.2-1.1-1.5-1.1-1.5-.9-.6.1-.6.1-.6 1 .1 1.5 1 1.5 1 .9 1.5 2.4 1.1 2.9.8.1-.7.4-1.1.6-1.3-2.2-.3-4.6-1.1-4.6-5 0-1.1.4-2 1-2.7-.1-.3-.4-1.3.1-2.7 0 0 .8-.3 2.8 1a9.6 9.6 0 0 1 5 0c1.9-1.3 2.8-1 2.8-1 .5 1.4.2 2.4.1 2.7.6.7 1 1.6 1 2.7 0 3.9-2.4 4.7-4.6 5 .4.3.7.9.7 1.9v2.8c0 .3.2.6.7.5A10 10 0 0 0 11.5 1.5z" fill="#8891aa"/></svg>
<div class="t" style="left:1739.62px;top:724.90px;font-size:28px;line-height:28px;color:#1283f0;font-weight:400;-webkit-text-stroke:0.67px #1283f0;transform:scaleX(0.9762);transform-origin:0 0;text-decoration:underline;text-decoration-thickness:2.5px;text-underline-offset:1.5px;">Github</div>
<svg style="position:absolute;left:1863px;top:725px;" width="20" height="24" viewBox="0 0 20 24"><path d="M2 2.5l15-1.5v21L2 20.5z" fill="#ea4c64"/><text x="5" y="17" font-family="Liberation Sans" font-weight="700" font-size="13" fill="#fff">S</text></svg>
<div class="t" style="left:1888.04px;top:724.90px;font-size:28px;line-height:28px;color:#1283f0;font-weight:400;-webkit-text-stroke:0.67px #1283f0;transform:scaleX(0.9598);transform-origin:0 0;text-decoration:underline;text-decoration-thickness:2.5px;text-underline-offset:1.5px;">Storybook</div>
<div class="t" style="left:1521.72px;top:844.54px;font-size:27px;line-height:27px;color:#1283f0;font-weight:400;-webkit-text-stroke:1.35px #1283f0;transform:scaleX(0.9835);transform-origin:0 0;">Guidelines</div>
<div class="t" style="left:1725.60px;top:844.54px;font-size:27px;line-height:27px;color:#aeb4c4;font-weight:400;-webkit-text-stroke:1.35px #aeb4c4;transform:scaleX(0.9282);transform-origin:0 0;">API</div>
<div class="t" style="left:1842.54px;top:844.54px;font-size:27px;line-height:27px;color:#aeb4c4;font-weight:400;-webkit-text-stroke:1.35px #aeb4c4;transform:scaleX(0.9643);transform-origin:0 0;">Changelog</div>
<div style="position:absolute;left:1515px;top:897px;width:1039px;height:3px;background:#1f2b40"></div>
<div style="position:absolute;left:1515px;top:895.5px;width:140px;height:4.5px;background:#1283f0;border-radius:2px"></div>
<div style="position:absolute;left:1516px;top:963px;width:1038px;height:500px;border:2.5px solid #39465e;border-radius:9px"></div>
<div style="position:absolute;left:1561px;top:1008px;width:990px;height:117px;background:#121c2d;border-top:2px solid #1f2b40"></div>
<div style="position:absolute;left:1561px;top:1124px;width:990px;height:2px;background:#1f2b40"></div>
<div style="position:absolute;left:1561px;top:1250px;width:990px;height:200px;background:#121c2d;border-top:2px solid #1f2b40"></div>
<div style="position:absolute;left:1559px;top:1008px;width:2px;height:450px;background:#1f2b40"></div>
<div class="t" style="left:1589.00px;top:1037.21px;font-size:25.5px;line-height:25.5px;color:#a7aec2;font-weight:400;-webkit-text-stroke:1.28px #a7aec2;letter-spacing:1.879px;">First</div>
<div class="t" style="left:1589.00px;top:1072.21px;font-size:25.5px;line-height:25.5px;color:#a7aec2;font-weight:400;-webkit-text-stroke:1.28px #a7aec2;letter-spacing:1.387px;">Name</div>
<div class="t" style="left:1741.50px;top:1054.71px;font-size:25.5px;line-height:25.5px;color:#a7aec2;font-weight:400;-webkit-text-stroke:1.28px #a7aec2;letter-spacing:0.735px;">Last Name</div>
<div class="t" style="left:1933.00px;top:1054.71px;font-size:25.5px;line-height:25.5px;color:#a7aec2;font-weight:400;-webkit-text-stroke:1.28px #a7aec2;letter-spacing:0.910px;">Country</div>
<div class="t" style="left:2133.00px;top:1054.71px;font-size:25.5px;line-height:25.5px;color:#a7aec2;font-weight:400;-webkit-text-stroke:1.28px #a7aec2;letter-spacing:1.226px;">Email</div>
<div class="t" style="left:1589.00px;top:1176.01px;font-size:25.5px;line-height:25.5px;color:#e1e3ea;font-weight:400;-webkit-text-stroke:0.61px #e1e3ea;letter-spacing:1.160px;">Lottie</div>
<div class="t" style="left:1741.50px;top:1176.01px;font-size:25.5px;line-height:25.5px;color:#e1e3ea;font-weight:400;-webkit-text-stroke:0.61px #e1e3ea;letter-spacing:1.163px;">Hintz</div>
<div class="t" style="left:1932.00px;top:1158.91px;font-size:25.5px;line-height:25.5px;color:#e1e3ea;font-weight:400;-webkit-text-stroke:0.61px #e1e3ea;letter-spacing:0.351px;">Republic of</div>
<div class="t" style="left:1932.03px;top:1193.41px;font-size:25.5px;line-height:25.5px;color:#e1e3ea;font-weight:400;-webkit-text-stroke:0.61px #e1e3ea;transform:scaleX(0.9871);transform-origin:0 0;">Korea</div>
<div class="t" style="left:2135.00px;top:1176.01px;font-size:25.5px;line-height:25.5px;color:#e1e3ea;font-weight:400;-webkit-text-stroke:0.61px #e1e3ea;letter-spacing:0.045px;">John.Zulauf@gmail.com</div>
<div class="t" style="left:1589.03px;top:1373.41px;font-size:25.5px;line-height:25.5px;color:#e1e3ea;font-weight:400;-webkit-text-stroke:0.61px #e1e3ea;transform:scaleX(0.9835);transform-origin:0 0;">Paige</div>
<div class="t" style="left:1741.50px;top:1373.41px;font-size:25.5px;line-height:25.5px;color:#e1e3ea;font-weight:400;-webkit-text-stroke:0.61px #e1e3ea;letter-spacing:0.722px;">Kshlerin</div>
<div class="t" style="left:1932.00px;top:1286.41px;font-size:25.5px;line-height:25.5px;color:#e1e3ea;font-weight:400;-webkit-text-stroke:0.61px #e1e3ea;letter-spacing:1.222px;">British</div>
<div class="t" style="left:1932.00px;top:1321.81px;font-size:25.5px;line-height:25.5px;color:#e1e3ea;font-weight:400;-webkit-text-stroke:0.61px #e1e3ea;letter-spacing:1.141px;">Indian</div>
<div class="t" style="left:1933.01px;top:1357.21px;font-size:25.5px;line-height:25.5px;color:#e1e3ea;font-weight:400;-webkit-text-stroke:0.61px #e1e3ea;transform:scaleX(0.9870);transform-origin:0 0;">Ocean</div>
<div class="t" style="left:1934.00px;top:1392.61px;font-size:25.5px;line-height:25.5px;color:#e1e3ea;font-weight:400;-webkit-text-stroke:0.61px #e1e3ea;">Territory</div>
<div class="t" style="left:2133.00px;top:1373.41px;font-size:25.5px;line-height:25.5px;color:#e1e3ea;font-weight:400;-webkit-text-stroke:0.61px #e1e3ea;letter-spacing:0.021px;">Natalie.Klein@yahoo.com</div>
<div style="position:absolute;left:2497px;top:1304px;width:56px;height:56px;background:#161a20;border-radius:50%;box-shadow:0 2px 6px rgba(0,0,0,.4)"></div>
<div class="t" style="left:2515.50px;top:1321.61px;font-size:30px;line-height:30px;color:#c8cbd3;font-weight:400;">?</div></body></html>
